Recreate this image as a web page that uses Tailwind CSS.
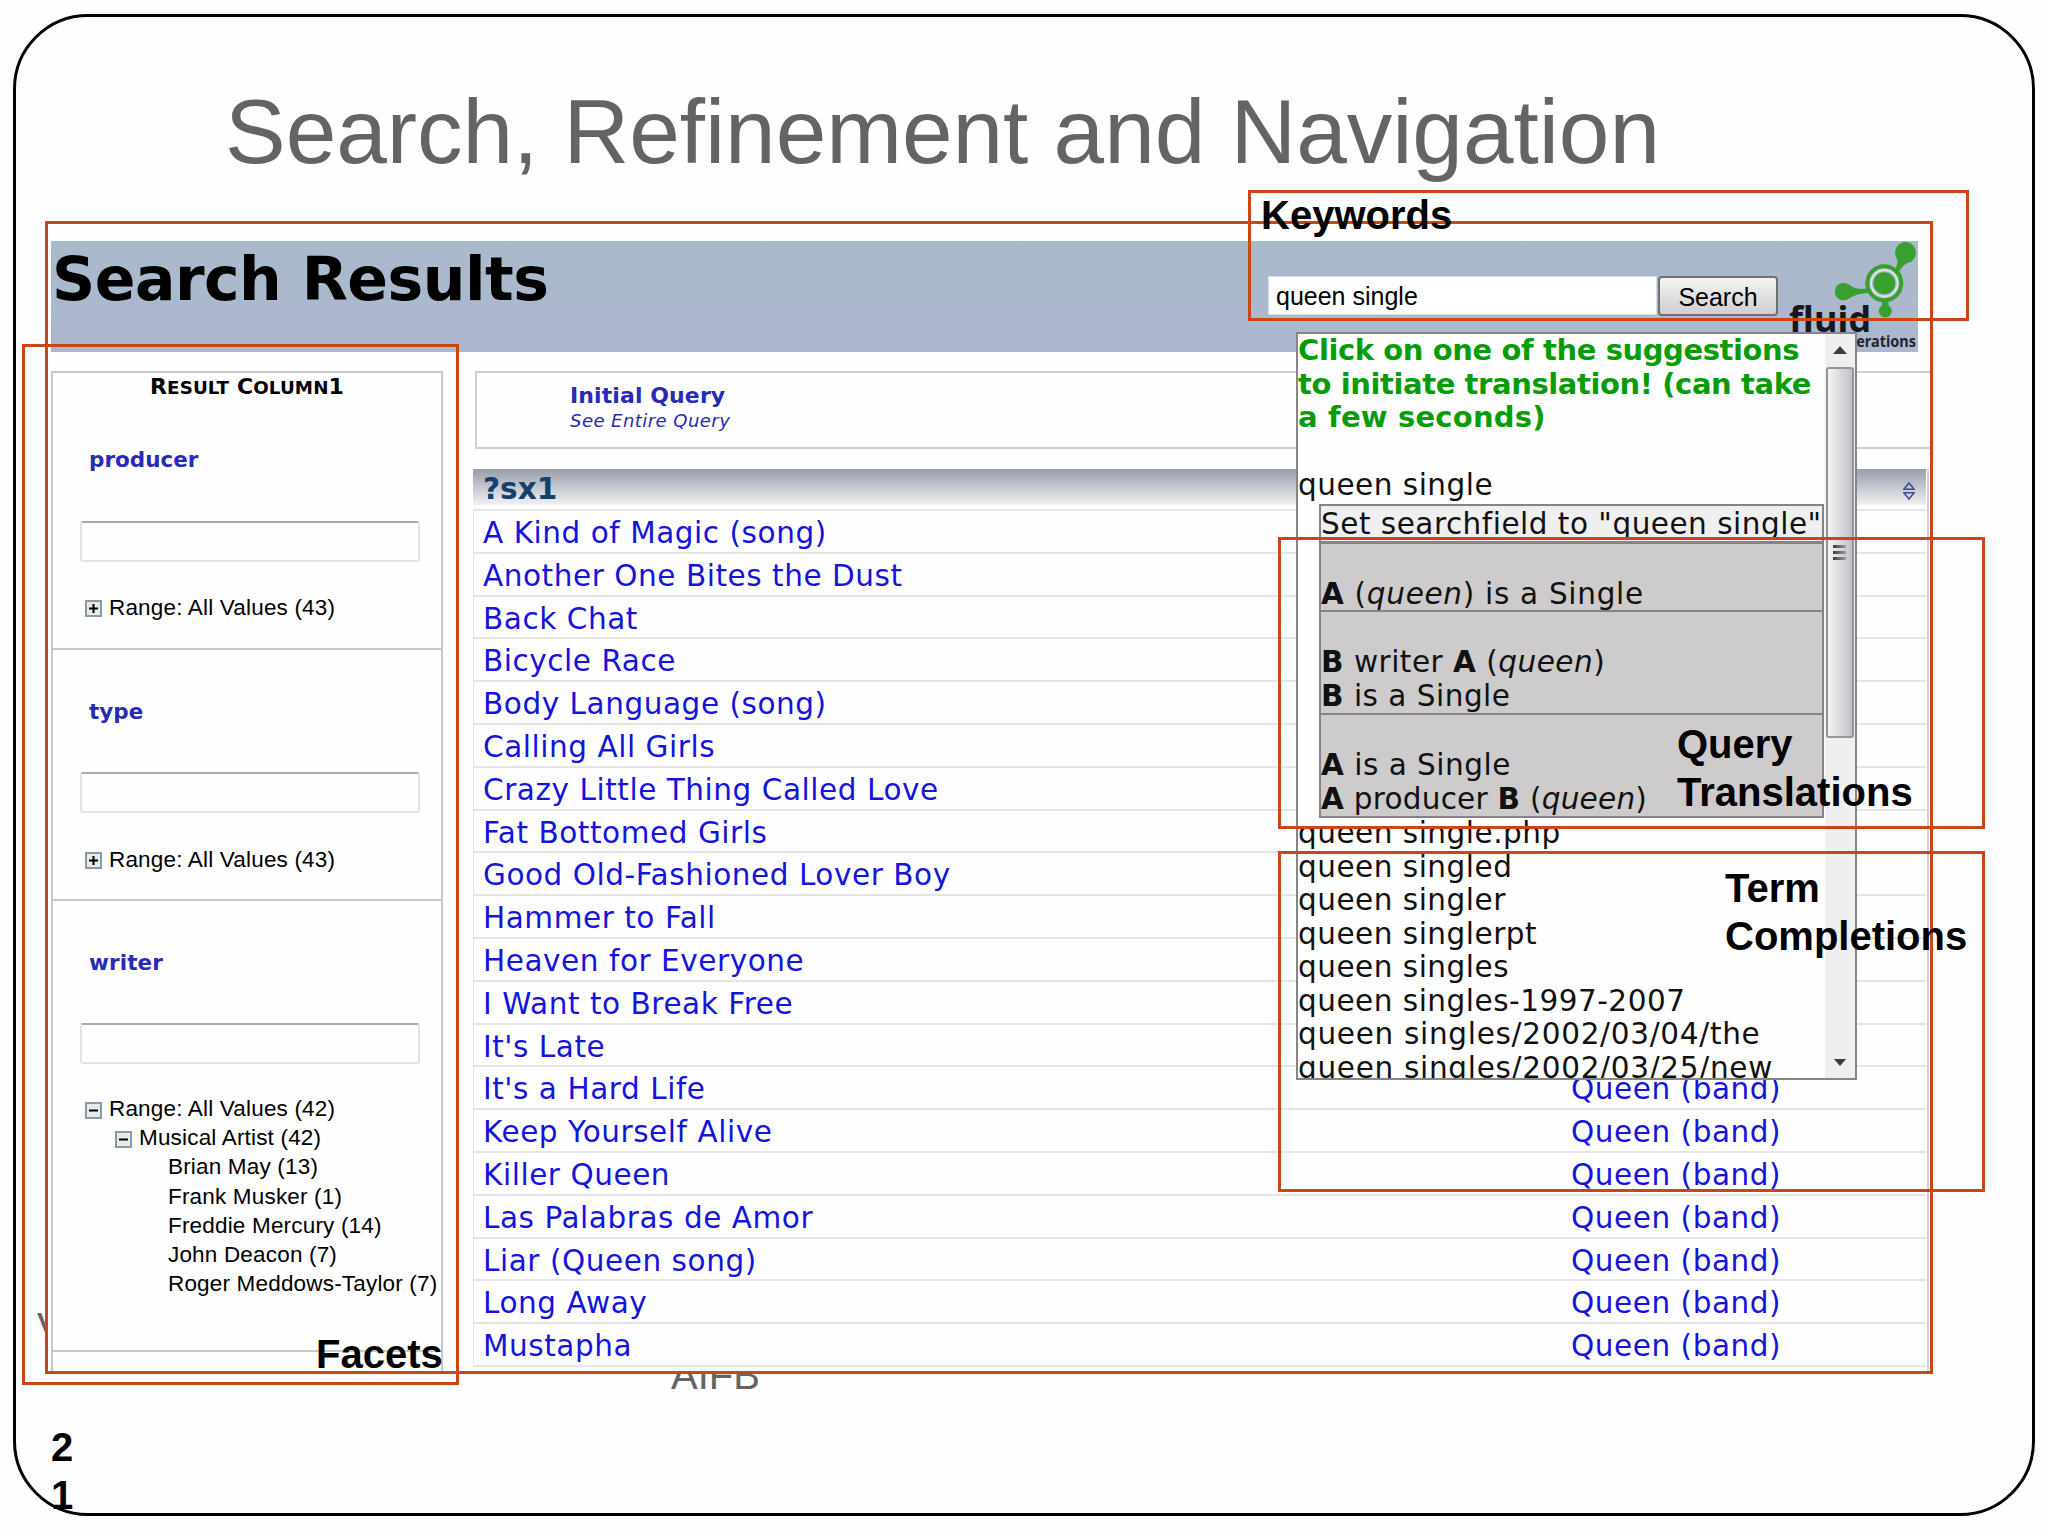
<!DOCTYPE html>
<html lang="en">
<head>
    <meta charset="UTF-8">
    <meta name="viewport" content="width=device-width, initial-scale=1.0">
    <title>Search, Refinement and Navigation</title>
    <script src="https://cdn.jsdelivr.net/npm/@tailwindcss/browser@4"></script>
</head>
<body class="bg-[#fefefe]">
<div class="relative w-[2048px] h-[1536px] overflow-hidden font-['Liberation_Sans',Arial,sans-serif] text-black">
    <!-- Slide frame -->
    <div class="absolute left-[13px] top-[14px] w-[2022px] h-[1502px] border-3 border-black rounded-[75px]"></div>

    <h1 class="absolute left-[225px] top-[77px] text-[91px] leading-[110px] tracking-[-0.05px] text-[#666366] whitespace-nowrap">Search, Refinement and Navigation</h1>

    <!-- Footer text, mostly covered by the screenshot -->
    <div class="absolute left-[37px] top-[1303px] text-[40px] leading-[48px] text-[#666366]">V</div>
    <div class="absolute left-[671px] top-[1351px] text-[40px] leading-[48px] text-[#666366]">AIFB</div>
    <div class="absolute left-[51px] top-[1423px] w-[24px] text-[40px] leading-[48px] font-bold break-all">21</div>

    <!-- Application screenshot -->
    <div class="absolute left-[48px] top-[241px] w-[1883px] h-[1130px] pl-[3px] overflow-hidden bg-[#fefefe]">
        <header class="flex justify-between w-[1867px] h-[111px] bg-linear-to-b from-[#a9bacb] to-[#adb7cf]">
            <h2 class="pl-px font-['DejaVu_Sans',sans-serif] font-bold text-[60px] leading-[76px] tracking-[-0.5px]">Search Results</h2>
            <div class="flex items-start">
                <div class="mt-[35px] w-[389px] h-[39px] pl-[7px] bg-white border border-[#d5dde8] text-[25px] leading-[38px]">queen single</div>
                <div class="mt-[35px] ml-px w-[120px] h-[40px] rounded-[4px] border-2 border-[#707070] bg-linear-to-b from-[#f4f4f4] to-[#cfcfcf] text-center text-[25px] leading-[38px]">Search</div>
                <svg class="w-[140px] h-[111px]" viewBox="1778 241 140 111">
                    <g fill="#3a9f31">
                        <path d="M1896 254 Q1900 266 1893 271 L1898 276 Q1900 264 1913 261Z"/>
                        <path d="M1848 284 Q1857 291 1867 288 L1868 293 Q1857 293 1848 299Z"/>
                        <path d="M1881 300 Q1884 305 1880 309 L1891 309 Q1887 305 1889 300Z"/>
                        <circle cx="1905.5" cy="252.5" r="10.5"/>
                        <circle cx="1843.5" cy="291.5" r="8.7"/>
                        <circle cx="1885.3" cy="311" r="6.5"/>
                        <circle cx="1884.3" cy="283.3" r="17" fill="#a9bacb" stroke="#3a9f31" stroke-width="4"/>
                        <circle cx="1884.3" cy="283.3" r="13.2" fill="none" stroke="#d8e4dc" stroke-width="2"/>
                        <circle cx="1884.3" cy="283.3" r="11"/>
                    </g>
                    <text x="1789" y="331.5" font-family="Noto Sans" font-weight="bold" font-size="36.5" textLength="82" lengthAdjust="spacingAndGlyphs" fill="#16181c">fluid</text>
                    <text x="1838" y="347" font-family="Noto Sans" font-weight="bold" font-size="16" textLength="78" lengthAdjust="spacingAndGlyphs" fill="#23262c">operations</text>
                </svg>
            </div>
        </header>

        <div class="flex mt-[19px]">
            <!-- Facets -->
            <aside class="w-[392px] h-[1002px] shrink-0 border-2 border-[#c8c8ca] text-[22.5px] tracking-[0.18px]">
                <section class="h-[277px] border-b-2 border-[#c8c8ca]">
                    <div class="text-center font-['DejaVu_Sans',sans-serif] font-bold text-[22px] leading-[28px] tracking-[0.1px]">R<span class="text-[18.3px]">ESULT</span> C<span class="text-[18.3px]">OLUMN</span>1</div>
                    <div class="mt-[43px] pl-[36px] font-['DejaVu_Sans',sans-serif] font-bold text-[21.5px] leading-[30px] tracking-normal text-[#2a2ab4]">producer</div>
                    <div class="mt-[46px] ml-[27px] w-[340px] h-[41px] rounded-[3px] border-2 border-[#e1e3e6] border-t-[#a9abb2]"></div>
                    <div class="mt-[33px] pl-[32px] flex items-center leading-[26px]">
                        <svg class="w-[17px] h-[17px] mr-[7px]" viewBox="0 0 17 17"><rect x="1" y="1" width="15" height="15" fill="#e9e9e7" stroke="#8b99ab" stroke-width="2"/><path d="M4 8.5h9M8.5 4v9" stroke="#000" stroke-width="2"/></svg>
                        Range: All Values (43)
                    </div>
                </section>
                <section class="h-[251px] pt-[47px] border-b-2 border-[#c8c8ca]">
                    <div class="pl-[36px] font-['DejaVu_Sans',sans-serif] font-bold text-[21.5px] leading-[30px] tracking-normal text-[#2a2ab4]">type</div>
                    <div class="mt-[45px] ml-[27px] w-[340px] h-[41px] rounded-[3px] border-2 border-[#e1e3e6] border-t-[#a9abb2]"></div>
                    <div class="mt-[34px] pl-[32px] flex items-center leading-[26px]">
                        <svg class="w-[17px] h-[17px] mr-[7px]" viewBox="0 0 17 17"><rect x="1" y="1" width="15" height="15" fill="#e9e9e7" stroke="#8b99ab" stroke-width="2"/><path d="M4 8.5h9M8.5 4v9" stroke="#000" stroke-width="2"/></svg>
                        Range: All Values (43)
                    </div>
                </section>
                <section class="h-[451px] pt-[47px] border-b-2 border-[#c8c8ca] whitespace-nowrap">
                    <div class="pl-[36px] font-['DejaVu_Sans',sans-serif] font-bold text-[21.5px] leading-[30px] tracking-[0.1px] text-[#2a2ab4]">writer</div>
                    <div class="mt-[45px] ml-[27px] w-[340px] h-[41px] rounded-[3px] border-2 border-[#e1e3e6] border-t-[#a9abb2]"></div>
                    <div class="mt-[30px] leading-[29.2px]">
                        <div class="pl-[32px] flex items-center">
                            <svg class="w-[17px] h-[17px] mr-[7px] mt-[4px]" viewBox="0 0 17 17"><rect x="1" y="1" width="15" height="15" fill="#e9e9e7" stroke="#8b99ab" stroke-width="2"/><path d="M4 8.5h9" stroke="#000" stroke-width="2"/></svg>
                            Range: All Values (42)
                        </div>
                        <div class="pl-[62px] flex items-center">
                            <svg class="w-[17px] h-[17px] mr-[7px] mt-[4px]" viewBox="0 0 17 17"><rect x="1" y="1" width="15" height="15" fill="#e9e9e7" stroke="#8b99ab" stroke-width="2"/><path d="M4 8.5h9" stroke="#000" stroke-width="2"/></svg>
                            Musical Artist (42)
                        </div>
                        <div class="pl-[115px]">
                            <div>Brian May (13)</div>
                            <div>Frank Musker (1)</div>
                            <div>Freddie Mercury (14)</div>
                            <div>John Deacon (7)</div>
                            <div>Roger Meddows-Taylor (7)</div>
                        </div>
                    </div>
                </section>
            </aside>

            <!-- Results -->
            <main class="ml-[30px] w-[1457px] shrink-0 font-['DejaVu_Sans',sans-serif]">
                <div class="ml-[2px] h-[78px] pt-[10px] pl-[93px] border-2 border-r-0 border-[#cfcfd1] text-[#2a2ab4]">
                    <div class="font-bold text-[22px] leading-[26px] tracking-[0.1px]">Initial Query</div>
                    <div class="italic text-[18px] leading-[23px] tracking-[0.45px]">See Entire Query</div>
                </div>
                <div class="mt-[20px] h-[902px] w-[1456px] border-r-2 border-[#d2d2d4]">
                    <div class="w-[1453px] h-[42px] border-b-2 border-[#e3e4e6]">
                        <div class="flex justify-between items-center h-[36px] pl-[10px] pr-[10px] bg-linear-to-b from-[#989daa] to-[#f1f2f5]">
                            <span class="mt-[5px] font-bold text-[29.5px] leading-[43px] text-[#15406e]">?sx1</span>
                            <svg class="w-[14px] h-[20px] mt-[7px]" viewBox="0 0 14 20" fill="none" stroke="#3d4b93" stroke-width="1.5"><path d="M2.5 7.5L7 2l4.500 5.500M1 8.300h12M1 11.700h12M2.500 12.500L7 18l4.500-5.500"/></svg>
                        </div>
                    </div>
                    <div id="rows" class="text-[29.5px] tracking-[0.55px] text-[#1414dc]"></div>
                </div>
            </main>
        </div>
    </div>

    <!-- Suggestion list -->
    <div class="absolute left-[1296px] top-[332px] w-[561px] h-[748px] flex overflow-hidden border-2 border-[#858585] bg-[#fefefe] font-['DejaVu_Sans',sans-serif] text-[29.5px] leading-[33.5px] tracking-[0.5px] text-[#111] whitespace-nowrap">
        <div class="w-[527px] shrink-0">
            <div class="font-bold text-[29px] tracking-[-0.4px] text-[#069c06]">Click on one of the suggestions<br>to initiate translation! (can take<br><span class="tracking-[0.2px]">a few seconds)</span></div>
            <div class="mt-[34px]">queen single</div>
            <div class="mt-[2px] ml-[21px] w-[505px] border-2 border-[#858387] bg-[#cdcbcc]">
                <div class="h-[35px] leading-[37px] bg-[#efeff0] tracking-[0.5px]">Set searchfield to "queen single"</div>
                <div class="h-[71px] border-t-3 border-b-2 border-[#858387] pt-[34px] tracking-[0.7px]"><b>A</b> (<i>queen</i>) is a Single</div>
                <div class="h-[103px] border-b-2 border-[#858387] pt-[34px]"><b>B</b> writer <b>A</b> (<i>queen</i>)<br><b>B</b> is a Single</div>
                <div class="h-[101px] pt-[34px]"><b>A</b> is a Single<br><span class="tracking-[0.25px]"><b>A</b> producer <b>B</b> (<i>queen</i>)</span></div>
            </div>
            <div class="-mt-[1px]">
                <div>queen single.php</div>
                <div>queen singled</div>
                <div>queen singler</div>
                <div>queen singlerpt</div>
                <div>queen singles</div>
                <div>queen singles-1997-2007</div>
                <div class="tracking-[0.7px]">queen singles/2002/03/04/the</div>
                <div class="tracking-[0.7px]">queen singles/2002/03/25/new</div>
            </div>
        </div>
        <!-- Scrollbar -->
        <div class="flex flex-col items-center w-[30px] h-full bg-[#efeff0]">
            <svg class="w-[14px] h-[8px] mt-[12px]" viewBox="0 0 14 8"><path d="M7 0l7 8H0z" fill="#3c3c3c"/></svg>
            <div class="mt-[13px] w-[28px] h-[371px] shrink-0 rounded-[3px] border-2 border-[#94949a] bg-linear-to-r from-[#f5f5f5] to-[#c0c0c6] pt-[176px]">
                <div class="ml-[5px] flex flex-col gap-[3px] w-[13px]">
                    <span class="h-[3px] bg-linear-to-r from-[#3c3c3c] to-[#a0a0a4]"></span>
                    <span class="h-[3px] bg-linear-to-r from-[#3c3c3c] to-[#a0a0a4]"></span>
                    <span class="h-[3px] bg-linear-to-r from-[#3c3c3c] to-[#a0a0a4]"></span>
                </div>
            </div>
            <svg class="w-[12px] h-[7px] mt-auto mb-[12px]" viewBox="0 0 14 8"><path d="M7 8l7-8H0z" fill="#3c3c3c"/></svg>
        </div>
    </div>

    <!-- Annotations -->
    <div class="absolute left-[45px] top-[221px] w-[1888px] h-[1153px] border-3 border-[#cb4617]"></div>
    <div class="absolute left-[22px] top-[344px] w-[437px] h-[1041px] border-3 border-[#cb4617]"></div>
    <div class="absolute left-[1248px] top-[190px] w-[721px] h-[131px] border-3 border-[#cb4617]"></div>
    <div class="absolute left-[1278px] top-[537px] w-[707px] h-[292px] border-3 border-[#cb4617]"></div>
    <div class="absolute left-[1278px] top-[851px] w-[707px] h-[341px] border-3 border-[#cb4617]"></div>
    <div class="absolute left-[1261px] top-[191px] text-[40px] leading-[48px] font-bold">Keywords</div>
    <div class="absolute left-[316px] top-[1330px] text-[40px] leading-[48px] font-bold">Facets</div>
    <div class="absolute left-[1677px] top-[720px] text-[40px] leading-[48px] font-bold">Query<br>Translations</div>
    <div class="absolute left-[1725px] top-[864px] text-[40px] leading-[48px] font-bold">Term<br>Completions</div>
</div>

<script>
    const songs = [
        "A Kind of Magic (song)", "Another One Bites the Dust", "Back Chat", "Bicycle Race",
        "Body Language (song)", "Calling All Girls", "Crazy Little Thing Called Love",
        "Fat Bottomed Girls", "Good Old-Fashioned Lover Boy", "Hammer to Fall",
        "Heaven for Everyone", "I Want to Break Free", "It's Late", "It's a Hard Life",
        "Keep Yourself Alive", "Killer Queen", "Las Palabras de Amor", "Liar (Queen song)",
        "Long Away", "Mustapha"
    ];

    // One row per song, every song has the same artist
    const rows = document.getElementById('rows');
    songs.forEach(function(song) {
        const row = document.createElement('div');
        row.className = 'flex w-[1453px] h-[42.8px] pl-[9px] leading-[44px] border-b-2 border-l border-[#e4e5e7]';
        row.innerHTML = '<span class="w-[1088px]">' + song + '</span><span>Queen (band)</span>';
        rows.appendChild(row);
    });
</script>
</body>
</html>
